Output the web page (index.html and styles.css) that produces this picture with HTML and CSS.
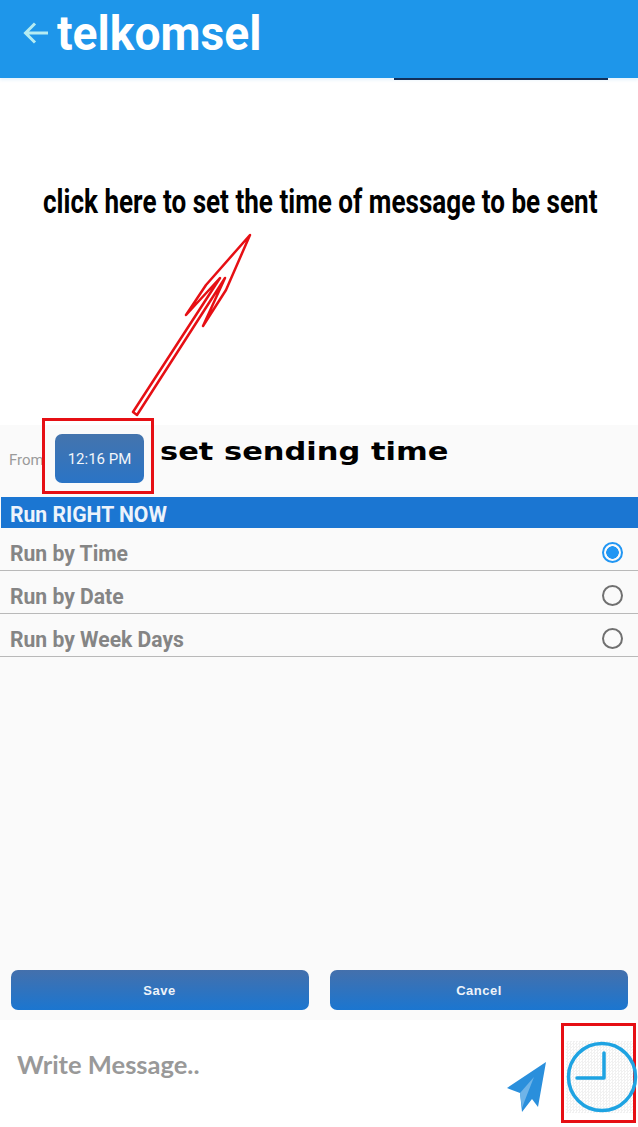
FILE: index.html
```html
<!DOCTYPE html>
<html lang="en">
<head>
<meta charset="utf-8">
<title>telkomsel</title>
<link rel="stylesheet" href="styles.css">
</head>
<body>
<div class="page">
  <header class="appbar">
    <svg class="back" width="28" height="28" viewBox="0 0 28 28"><path d="M26 14H4M13 4.500 3.500 14l9.500 9.500" fill="none" stroke="#b5ecf2" stroke-width="3"/></svg>
    <h1 class="title">telkomsel</h1>
  </header>
  <div class="appbar-line"></div>
  <section class="hint">
    <p class="hint-text">click here to set the time of message to be sent</p>
  </section>
  <section class="panel">
    <div class="from-row">
      <span class="from-label">From</span>
      <button class="time-btn">12:16 PM</button>
      <span class="set-time">set sending time</span>
    </div>
    <div class="run-now"><span>Run RIGHT NOW</span></div>
    <div class="option"><span>Run by Time</span><i class="radio on"></i></div>
    <div class="option"><span>Run by Date</span><i class="radio"></i></div>
    <div class="option"><span>Run by Week Days</span><i class="radio"></i></div>
    <div class="spacer"></div>
    <div class="actions">
      <button class="action save">Save</button>
      <button class="action cancel">Cancel</button>
    </div>
  </section>
  <footer class="composer">
    <span class="write">Write Message..</span>
    <svg class="send" width="46" height="56" viewBox="0 0 46 56"><path d="M46 4 7 30 20 35 22 54 32 41 38 49z" fill="#2a8fdc"/><path d="M20 35 34 19 25 42 22 50z" fill="#6fb4e8"/></svg>
    <div class="clock-box">
      <svg class="clock" width="72" height="72" viewBox="0 0 72 72"><circle cx="36" cy="36" r="33.500" fill="none" stroke="#1ea3e2" stroke-width="3.500"/><path d="M38 12v25H11" fill="none" stroke="#1ea3e2" stroke-width="3.500" stroke-linecap="round" stroke-linejoin="round"/></svg>
    </div>
  </footer>
  <div class="mark-time"></div>
  <svg class="arrow" width="140" height="195" viewBox="0 0 140 195"><path d="M13 187 100 53 66 90 86 60 130 10 106 65 83 101 105 53 17 190Z" fill="none" stroke="#e60f14" stroke-width="2.500" stroke-linejoin="round"/></svg>
</div>
</body>
</html>
```
FILE: styles.css
```css
* { box-sizing: border-box; }
html, body { margin: 0; padding: 0; background: #fff; }
.page { position: relative; width: 638px; height: 1127px; overflow: hidden; font-family: Roboto, "Liberation Sans", sans-serif; }
.appbar { height: 78px; background: #1e96ea; display: flex; align-items: flex-start; padding: 19px 0 0 22px; gap: 7px; box-shadow: 0 2px 3px rgba(30, 150, 234, .12); }
.back { flex: none; }
.title { margin: -13px 0 0; color: #fff; font-size: 48px; line-height: 56px; font-weight: 700; transform: scaleX(.962); transform-origin: left center; }
.appbar-line { height: 2px; margin-left: 394px; width: 214px; background: #12305a; position: relative; }
.hint { height: 345px; padding: 101px 0 0 43px; }
.hint-text { margin: 0; width: max-content; font-size: 34px; line-height: 40px; font-weight: 700; color: #000; white-space: nowrap; transform: scaleX(.767); transform-origin: left center; }
.panel { height: 595px; background: #fafafa; display: flex; flex-direction: column; }
.from-row { height: 72px; display: flex; align-items: flex-start; padding: 9px 0 0 9px; }
.from-label { margin-top: 18px; width: 46px; font-size: 15px; line-height: 17px; color: #9a9a9a; white-space: nowrap; overflow: hidden; }
.time-btn { width: 89px; height: 49px; border: 0; border-radius: 7px; background: linear-gradient(#4474ad, #2a74c6); color: #f2f6fa; font: 15px Roboto, sans-serif; }
.set-time { margin: 4px 0 0 16px; font-family: "DejaVu Sans", sans-serif; font-weight: 700; font-size: 24px; line-height: 28px; color: #000; transform: scaleX(1.27); transform-origin: left center; white-space: nowrap; }
.run-now { height: 31px; margin-left: 1px; background: #1b76d2; color: #ecf3fb; font-size: 22px; line-height: 35px; font-weight: 700; padding-left: 9px; }
.run-now span, .option span { display: inline-block; transform: scaleX(.96); transform-origin: left center; white-space: nowrap; }
.option { height: 43px; display: flex; align-items: center; justify-content: space-between; padding: 6px 15px 0 10px; border-bottom: 1.500px solid #b9b9b9; color: #858585; font-size: 22px; font-weight: 700; }
.option span { margin-top: 3px; }
.radio { width: 21px; height: 21px; border-radius: 50%; border: 2px solid #707070; display: block; }
.radio.on { border-color: #2196f3; background: radial-gradient(circle, #2196f3 0 6px, transparent 6.500px); }
.spacer { flex: 1; }
.actions { display: flex; padding: 0 10px 10px 10.500px; gap: 21.500px; }
.action { height: 40px; border: 0; border-radius: 7px; background: linear-gradient(#4470ac, #1b76d0); color: #eef3f9; font: 700 13px "Liberation Sans", sans-serif; letter-spacing: .5px; }
.save { width: 298px; }
.cancel { width: 298px; }
.composer { height: 107px; display: flex; align-items: flex-start; position: relative; }
.write { margin: 27px 0 0 17px; font-family: Lato, sans-serif; font-weight: 700; font-size: 25.500px; line-height: 34px; color: #999; flex: 1; }
.send { margin: 38px 15px 0 0; flex: none; }
.clock-box { width: 75px; height: 100px; margin: 3px 2px 0 0; border: 3px solid #e60f14; flex: none; position: relative; }
.clock-box::before { content: ""; position: absolute; left: 2px; right: 0; top: 15px; height: 72px; background: conic-gradient(#f1f1f1 25%, #fff 0 50%, #f1f1f1 0 75%, #fff 0) 0 0 / 3px 3px; }
.clock { position: absolute; left: 2px; top: 15px; overflow: visible; }
.mark-time { position: absolute; left: 42px; top: 418px; width: 112px; height: 76px; border: 3px solid #e60f14; }
.arrow { position: absolute; left: 120px; top: 225px; }
```
